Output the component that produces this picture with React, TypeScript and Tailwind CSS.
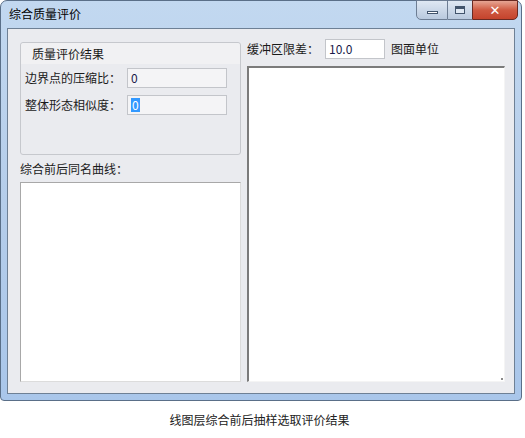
import React from "react";

const font = { fontFamily: '"Noto Sans CJK SC", "Microsoft YaHei", sans-serif' };

export default function App() {
  return (
    <div className="w-[525px] h-[438px] bg-white flex flex-col" style={font}>
      <div className="w-[522px] h-[401px] rounded-t-[7px] rounded-b-[4px] border border-[#5a6f88] bg-gradient-to-b from-[#c2d8f0] via-[#b5cdea] to-[#a9c6ea] flex flex-col">
        {/* title bar */}
        <div className="h-[27px] flex items-start justify-between relative">
          <div className="text-[12px] text-black pl-[8px] pt-[5px] leading-[16px]">综合质量评价</div>
          <div className="flex mr-[3px] -mt-[1px]">
            <div className="w-[32px] h-[20px] rounded-bl-[5px] border border-[#6d7d93] bg-gradient-to-b from-[#dfe8f3] to-[#b9c9de] flex items-center justify-center">
              <div className="w-[11px] h-[3px] bg-white border border-[#42546c] mt-[5px]" />
            </div>
            <div className="w-[24px] h-[20px] border-y border-[#6d7d93] bg-gradient-to-b from-[#dfe8f3] to-[#b9c9de] flex items-center justify-center">
              <div className="w-[10px] h-[8px] border border-[#42546c] border-t-[3px] bg-[#dfe8f3]" />
            </div>
            <div className="w-[46px] h-[20px] rounded-br-[5px] border border-[#6a2a22] bg-gradient-to-b from-[#e6a594] via-[#cf5a42] to-[#c4432c] flex items-center justify-center">
              <span className="text-white font-bold text-[13px] leading-none" style={{ fontFamily: '"DejaVu Sans", sans-serif' }}>✕</span>
            </div>
          </div>
        </div>
        {/* client */}
        <div className="flex-1 px-[6px] pb-[6px] flex">
          <div className="flex-1 border border-[#6e8095] bg-[#eaebef] flex pt-[10px] pl-[12px] pr-[9px] pb-[11px] gap-[6px] text-[12px] text-[#1a1a1a]">
            {/* left column */}
            <div className="w-[221px] flex flex-col pt-[3px]">
              <div className="h-[113px] border border-[#c6c8cd] rounded-[3px] flex flex-col">
                <div className="h-[21px] bg-[#f1f1f3] pl-[11px] leading-[21px] text-[12px] rounded-t-[3px]">质量评价结果</div>
                <div className="flex flex-col gap-[7px] pt-[4px] pl-[4px]">
                  <div className="flex items-center">
                    <span className="w-[102px]">边界点的压缩比：</span>
                    <div className="w-[100px] h-[20px] border border-[#c3c5ca] bg-[#f4f4f6] pl-[3px] leading-[18px] text-[#1a1a4a]">0</div>
                  </div>
                  <div className="flex items-center">
                    <span className="w-[102px]">整体形态相似度：</span>
                    <div className="w-[100px] h-[20px] border border-[#c3c5ca] bg-[#f4f4f6] pl-[3px] flex items-center">
                      <span className="bg-[#3399ff] text-white leading-[14px] px-[1px]">0</span>
                    </div>
                  </div>
                </div>
              </div>
              <div className="mt-[6px] h-[16px] leading-[16px]">综合前后同名曲线：</div>
              <div className="mt-[5px] flex-1 border border-[#a8a8a8] border-r-[#dcdcdc] border-b-[#dcdcdc] bg-white" />
            </div>
            {/* right column */}
            <div className="flex-1 flex flex-col">
              <div className="flex items-center h-[20px]">
                <span className="w-[78px]">缓冲区限差：</span>
                <div className="w-[60px] h-[20px] border border-[#c3c5ca] bg-white pl-[3px] leading-[18px] text-[#1a1a4a]">10.0</div>
                <span className="ml-[6px]">图面单位</span>
              </div>
              <div className="mt-[7px] flex-1 border-t-[2px] border-l-[2px] border-[#7b7b7b] border-r border-b border-r-[#f4f4f4] border-b-[#f4f4f4] bg-white relative">
                <div className="absolute right-[1px] bottom-[1px] w-[2px] h-[2px] bg-[#8a8a8a]" />
              </div>
            </div>
          </div>
        </div>
      </div>
      <div className="flex-1 flex items-center justify-center text-[12px] text-[#222] pr-[6px]">线图层综合前后抽样选取评价结果</div>
    </div>
  );
}
